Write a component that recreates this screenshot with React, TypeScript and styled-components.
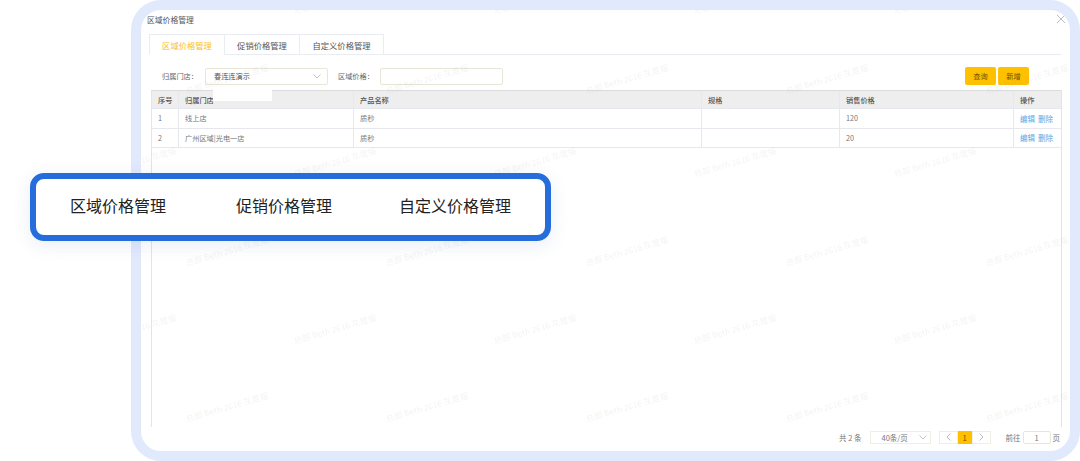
import { FC } from 'react'
import styled, { createGlobalStyle } from 'styled-components'

const GlobalStyle = createGlobalStyle`
  html, body {
    margin: 0;
    padding: 0;
    background: #fff;
  }

  body {
    width: 1080px;
    height: 461px;
    overflow: hidden;
    font-family: 'Noto Sans CJK SC', 'Liberation Sans', sans-serif;
  }
`

const Page = styled.div`
  position: relative;
  width: 1080px;
  height: 461px;
  padding-left: 131px;
  box-sizing: border-box;
`

const Frame = styled.section`
  position: relative;
  display: flex;
  flex-direction: column;
  height: 461px;
  box-sizing: border-box;
  border: 10px solid #e1e9fd;
  border-radius: 30px;
  background: #fff;
  overflow: hidden;
  padding: 0 8px;
  color: #606266;
`

const TitleBar = styled.header`
  display: flex;
  justify-content: space-between;
  align-items: center;
  height: 16px;
  margin: 1px 0 0 -2px;
  font-size: 7.8px;
  color: #555;
`

const CloseIcon = styled.svg`
  width: 10px;
  height: 10px;
  margin-right: -4px;
  stroke: #bbb;
  stroke-width: 1;
  fill: none;
`

const Tabs = styled.nav`
  display: flex;
  height: 20px;
  margin-top: 7px;
  border-bottom: 1px solid #e9edf1;
`

const Tab = styled.div<{ $active?: boolean; $first?: boolean; $width: number }>`
  width: ${(p) => p.$width}px;
  display: flex;
  align-items: center;
  justify-content: center;
  box-sizing: border-box;
  height: 21px;
  font-size: 8.3px;
  color: ${(p) => (p.$active ? '#fbc02d' : '#555')};
  background: #fff;
  border: 1px solid #e9edf1;
  border-left-width: ${(p) => (p.$first ? 1 : 0)}px;
  border-bottom-color: ${(p) => (p.$active ? '#fff' : '#e9edf1')};
`

const Filters = styled.div`
  display: flex;
  align-items: center;
  height: 18px;
  margin-top: 12px;
  font-size: 7.2px;
  color: #666;
`

const FilterLabel = styled.label<{ $gap: number; $after: number }>`
  margin-left: ${(p) => p.$gap}px;
  margin-right: ${(p) => p.$after}px;
`

const SelectBox = styled.div`
  display: flex;
  align-items: center;
  justify-content: space-between;
  width: 123px;
  height: 17px;
  box-sizing: border-box;
  padding: 0 6px 0 8px;
  border: 1px solid #e8e6d8;
  border-radius: 2px;
  color: #555;
`

const Chevron = styled.svg`
  width: 8px;
  height: 5px;
  stroke: #c4c4c4;
  stroke-width: 1;
  fill: none;
`

const PageChevron = styled.svg`
  width: 5px;
  height: 8px;
  stroke: #bbb;
  stroke-width: 1;
  fill: none;
`

const PriceInput = styled.div`
  width: 123px;
  height: 17px;
  box-sizing: border-box;
  border: 1px solid #e8e6d8;
  border-radius: 2px;
`

const Actions = styled.div`
  display: flex;
  gap: 2px;
  margin-left: auto;
  margin-right: 33px;
`

const ActionButton = styled.button`
  width: 31px;
  height: 18px;
  padding: 0;
  border: 0;
  border-radius: 2px;
  background: #ffc000;
  color: #6b5200;
  font-family: inherit;
  font-size: 7.2px;
`

const TableWrap = styled.div`
  flex: 1;
  margin: 5px 0 0 2px;
  border: 1px solid #e4e4e4;
  border-bottom: 0;
  border-top: 0;
`

const Row = styled.div<{ $head?: boolean }>`
  display: grid;
  grid-template-columns: 27px 175px 348px 138px 174px 1fr;
  height: 19.3px;
  box-sizing: border-box;
  border-top: ${(p) => (p.$head ? '1px solid #dcdcdc' : '0')};
  border-bottom: 1px solid #e6e8ee;
  background: ${(p) => (p.$head ? '#eeeeee' : '#fff')};
  font-size: 7.2px;
  font-weight: ${(p) => (p.$head ? 500 : 400)};
  color: ${(p) => (p.$head ? '#555' : '#777')};
`

const Cell = styled.div`
  display: flex;
  align-items: center;
  gap: 3px;
  padding-left: 6px;
  white-space: nowrap;
  border-right: 1px solid #e6e8ee;

  &:last-child {
    border-right: 0;
  }
`

const Link = styled.a`
  color: #5aa7df;
  font-size: 7.5px;
`

const Pager = styled.footer`
  display: flex;
  align-items: center;
  height: 24px;
  box-sizing: border-box;
  padding: 0 2px 4px 0;
  justify-content: flex-end;
  font-size: 7.5px;
  color: #777;
`

const PageSize = styled.div`
  display: flex;
  align-items: center;
  justify-content: space-between;
  box-sizing: border-box;
  width: 61px;
  height: 13px;
  margin: 0 8px;
  padding: 0 3px 0 11px;
  border: 1px solid #f0eee4;
`

const PageButton = styled.div<{ $active?: boolean }>`
  width: ${(p) => (p.$active ? 14 : 19)}px;
  height: 13px;
  box-sizing: border-box;
  display: flex;
  align-items: center;
  justify-content: center;
  background: ${(p) => (p.$active ? '#ffc000' : '#fff')};
  color: ${(p) => (p.$active ? '#6b5200' : '#aaa')};
  border: ${(p) => (p.$active ? '0' : '1px solid #f0eee4')};
`

const JumpLabel = styled.span`
  margin-left: 15px;
`

const JumpInput = styled.div`
  width: 28px;
  height: 13px;
  box-sizing: border-box;
  margin: 0 2px;
  border: 1px solid #e8e6d8;
  border-radius: 2px;
  text-align: center;
  line-height: 11px;
`

const Watermarks = styled.div`
  position: absolute;
  inset: 0;
  overflow: hidden;
  pointer-events: none;
`

const Watermark = styled.span<{ $x: number; $y: number }>`
  position: absolute;
  left: ${(p) => p.$x}px;
  top: ${(p) => p.$y}px;
  font-size: 8.5px;
  line-height: 10px;
  white-space: nowrap;
  color: rgba(120, 120, 120, 0.1);
  transform: rotate(-16deg);
  transform-origin: left bottom;
`

const Patch = styled.div`
  position: absolute;
  left: 72px;
  top: 80px;
  width: 59px;
  height: 11px;
  background: #fff;
`

const Callout = styled.div`
  position: absolute;
  left: 30px;
  top: 173px;
  width: 521px;
  height: 68px;
  box-sizing: border-box;
  display: flex;
  align-items: center;
  padding: 0 0 4px 34px;
  background: #fff;
  border: 6px solid #266ddc;
  border-radius: 14px;
  box-shadow: 0 4px 18px rgba(38, 80, 160, 0.1);
  font-size: 16px;
  color: #222;
`

const CalloutItem = styled.span<{ $width: number }>`
  width: ${(p) => p.$width}px;
`

const tabs = [
  { label: '区域价格管理', width: 76 },
  { label: '促销价格管理', width: 75 },
  { label: '自定义价格管理', width: 84 },
]

const columns = ['序号', '归属门店', '产品名称', '规格', '销售价格', '操作']

const rows = [
  { id: 1, store: '线上店', product: '质秒', price: '120' },
  { id: 2, store: '广州区域|光电一店', product: '质秒', price: '20' },
]

// left-bottom corners of the watermark text, in page pixels
const markRows = [
  { y: 15, start: 95 },
  { y: 95, start: 187 },
  { y: 178, start: 95 },
  { y: 267, start: 187 },
  { y: 345, start: 95 },
  { y: 423, start: 187 },
]

const marks = markRows.flatMap(({ y, start }) =>
  [0, 200, 400, 600, 800, 1000]
    .map((dx) => start + dx)
    .filter((x) => x < 1070)
    .map((x) => ({ x: x - 141, y: y - 20 }))
)

const App: FC = () => (
  <>
    <GlobalStyle />
    <Page>
      <Frame>
        <TitleBar>
          <span>区域价格管理</span>
          <CloseIcon viewBox="0 0 10 10">
            <path d="M1 1l8 8M9 1l-8 8" />
          </CloseIcon>
        </TitleBar>
        <Tabs>
          {tabs.map((tab, i) => (
            <Tab key={tab.label} $active={i === 0} $first={i === 0} $width={tab.width}>
              {tab.label}
            </Tab>
          ))}
        </Tabs>
        <Filters>
          <FilterLabel $gap={13} $after={7}>
            归属门店：
          </FilterLabel>
          <SelectBox>
            <span>春连连演示</span>
            <Chevron viewBox="0 0 8 5">
              <path d="M.5.5L4 4 7.5.5" />
            </Chevron>
          </SelectBox>
          <FilterLabel $gap={10} $after={6}>
            区域价格：
          </FilterLabel>
          <PriceInput />
          <Actions>
            <ActionButton>查询</ActionButton>
            <ActionButton>新增</ActionButton>
          </Actions>
        </Filters>
        <TableWrap>
          <Row $head>
            {columns.map((c) => (
              <Cell key={c}>{c}</Cell>
            ))}
          </Row>
          {rows.map((row) => (
            <Row key={row.id}>
              <Cell>{row.id}</Cell>
              <Cell>{row.store}</Cell>
              <Cell>{row.product}</Cell>
              <Cell />
              <Cell>{row.price}</Cell>
              <Cell>
                <Link>编辑</Link>
                <Link>删除</Link>
              </Cell>
            </Row>
          ))}
        </TableWrap>
        <Pager>
          <span>共 2 条</span>
          <PageSize>
            <span>40条/页</span>
            <Chevron viewBox="0 0 8 5">
              <path d="M.5.5L4 4 7.5.5" />
            </Chevron>
          </PageSize>
          <PageButton>
            <PageChevron viewBox="0 0 5 8">
              <path d="M4.5.5L1 4l3.5 3.5" />
            </PageChevron>
          </PageButton>
          <PageButton $active>1</PageButton>
          <PageButton>
            <PageChevron viewBox="0 0 5 8">
              <path d="M.5.5L4 4 .5 7.5" />
            </PageChevron>
          </PageButton>
          <JumpLabel>前往</JumpLabel>
          <JumpInput>1</JumpInput>
          <span>页</span>
        </Pager>
        <Watermarks>
          {marks.map(({ x, y }) => (
            <Watermark key={`${x}-${y}`} $x={x} $y={y}>
              总部 Beth 2616 灰度版
            </Watermark>
          ))}
        </Watermarks>
        <Patch />
      </Frame>
      <Callout>
        <CalloutItem $width={166}>区域价格管理</CalloutItem>
        <CalloutItem $width={163}>促销价格管理</CalloutItem>
        <CalloutItem $width={120}>自定义价格管理</CalloutItem>
      </Callout>
    </Page>
  </>
)

export default App
